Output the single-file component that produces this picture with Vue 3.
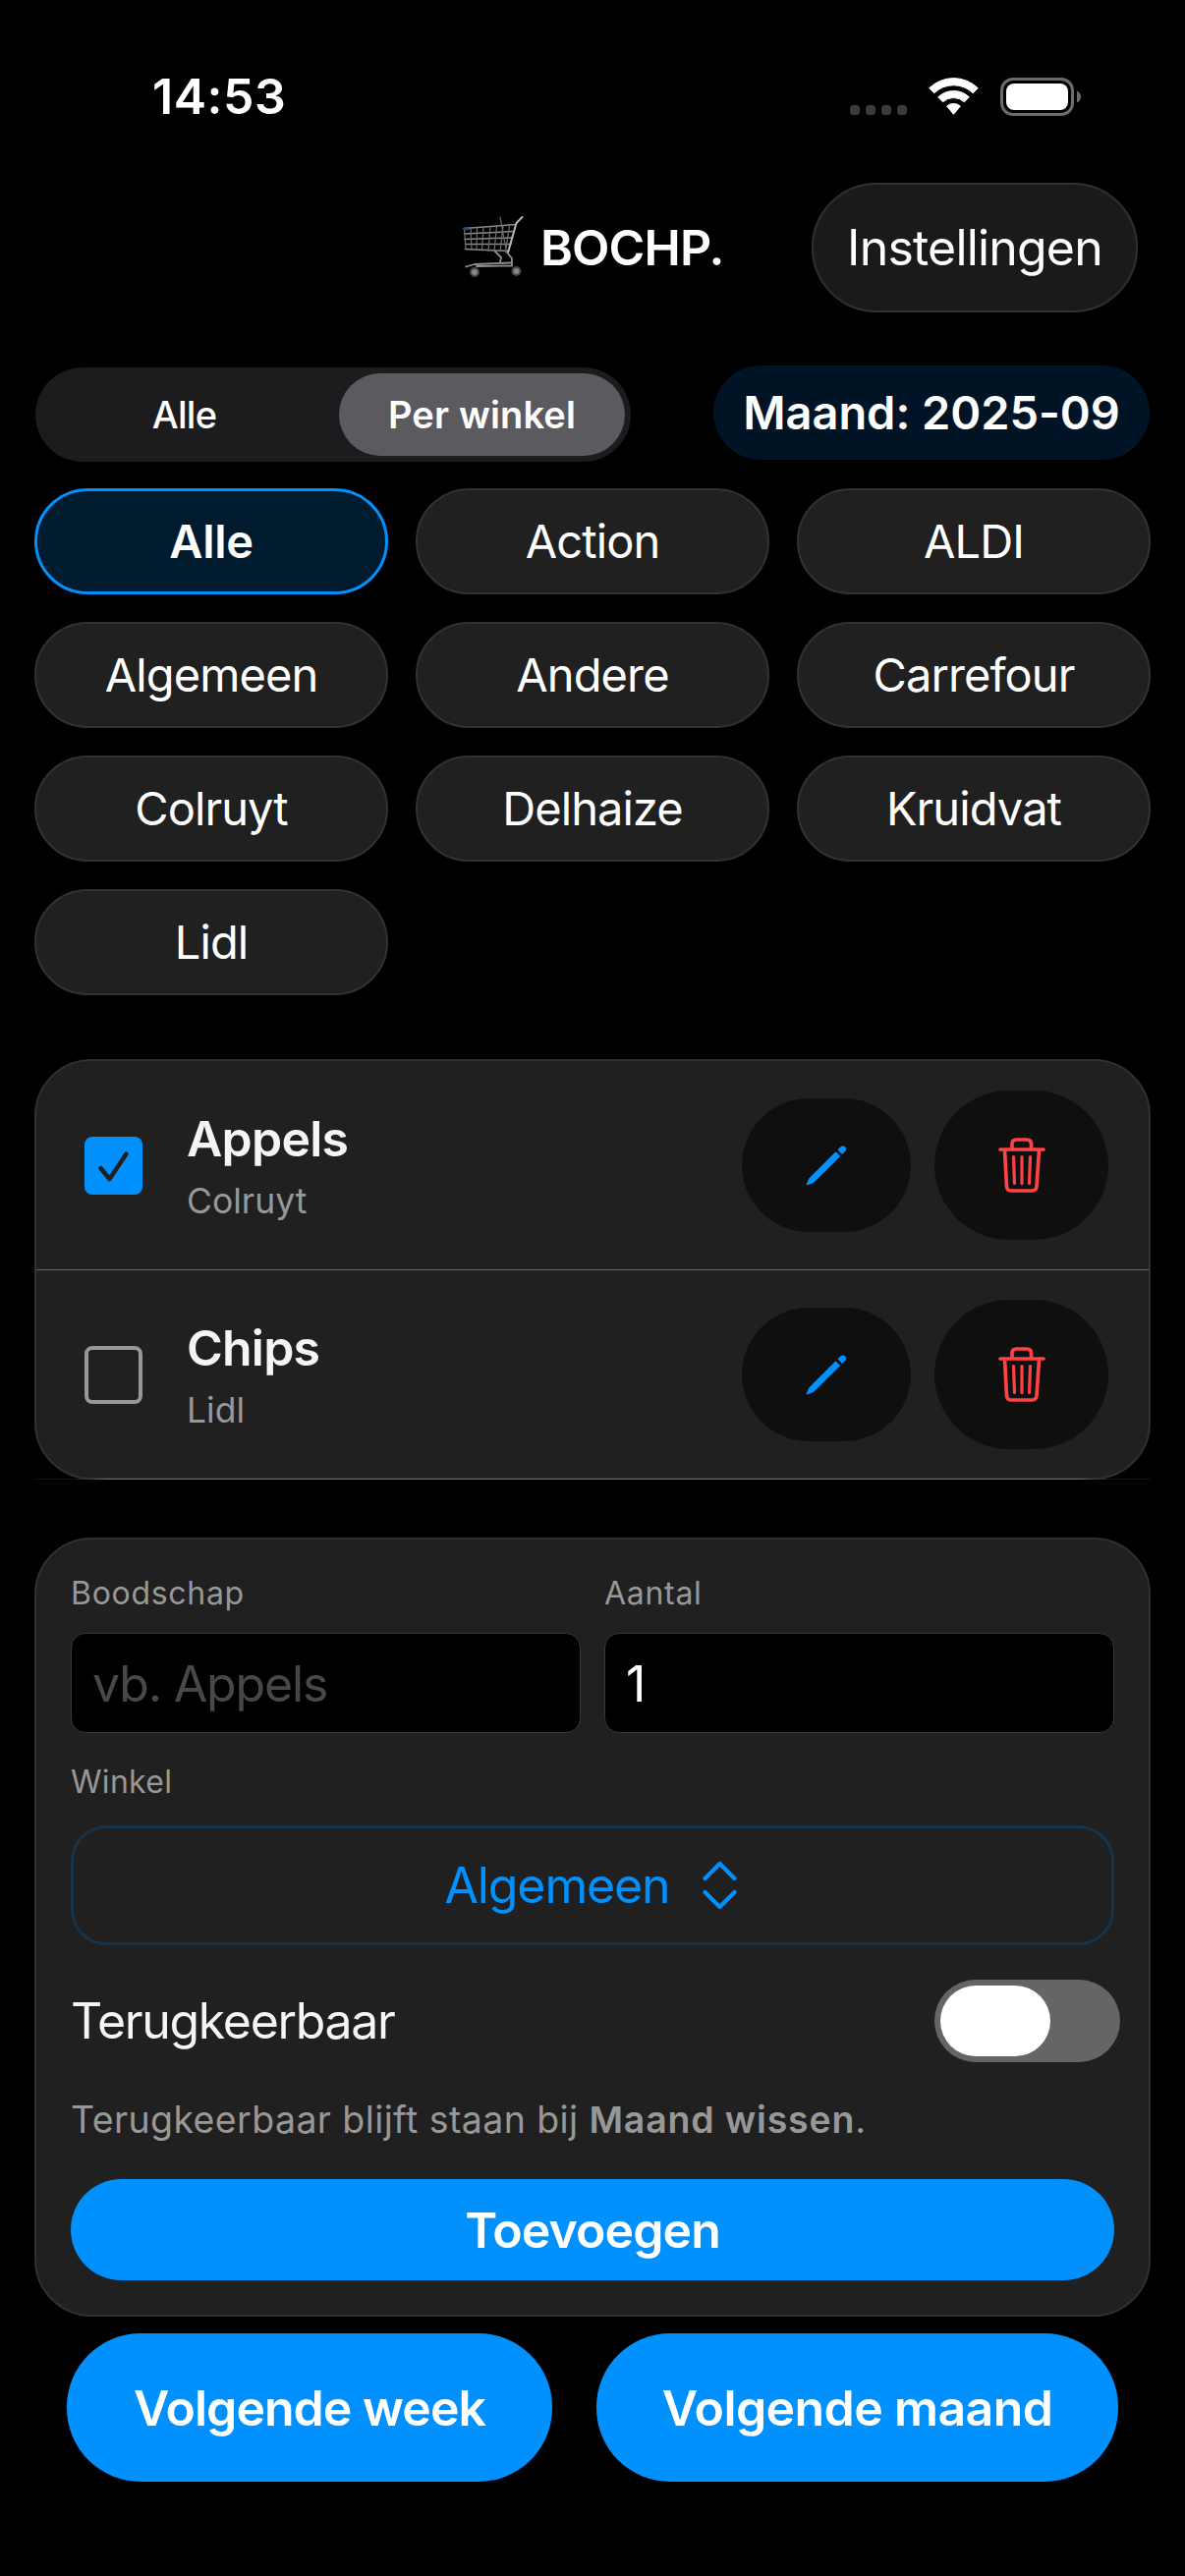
<script setup>
import { ref } from 'vue'

const shops = ['Alle', 'Action', 'ALDI', 'Algemeen', 'Andere', 'Carrefour', 'Colruyt', 'Delhaize', 'Kruidvat', 'Lidl']
const activeShop = ref('Alle')
const items = ref([
  { name: 'Appels', shop: 'Colruyt', done: true },
  { name: 'Chips', shop: 'Lidl', done: false },
])
</script>

<template>
  <div class="screen">
    <header class="status">
      <span class="time">14:53</span>
      <div class="status-icons">
        <span class="dots"><i v-for="n in 4" :key="n"></i></span>
        <svg class="wifi" width="51" height="38" viewBox="0 0 51 38">
          <path d="M0.8 10.6A35.5 35.5 0 0 1 50.2 10.6L45.3 15.8A28.4 28.4 0 0 0 5.7 15.8Z M9.7 19.8A23 23 0 0 1 41.3 19.8L36.4 24.8A16 16 0 0 0 14.6 24.8Z M18.6 29A10.5 10.5 0 0 1 32.4 29L25.5 37.3Z" fill="#fff" stroke="#fff" stroke-width="1" stroke-linejoin="round" />
        </svg>
        <svg class="battery" width="82" height="39" viewBox="0 0 82 39">
          <rect x="1.5" y="1.5" width="72" height="36" rx="11.5" fill="none" stroke="#6b6b6b" stroke-width="3" />
          <rect x="6" y="6" width="63" height="27" rx="8" fill="#fff" />
          <path d="M78 13.5Q82 15.5 82 19.5T78 25.5Z" fill="#6b6b6b" />
        </svg>
      </div>
    </header>

    <nav class="navbar">
      <h1 class="title">
        <svg class="cart" width="62" height="64" viewBox="0 0 62 64" fill="none" stroke-linecap="round" stroke-linejoin="round">
          <path d="M1 12.5L54 8.5M1.5 18L52 15.5M2 23.5L50.5 22M2.5 28.5L49 28.5M2.5 33.5L47 35.5" stroke="#8c8c8c" stroke-width="1.5" />
          <path d="M1.5 12L3 34M8 12L9 34.5M14.5 11.5L14 34.5M21 11L19.5 35M28 10.5L26 35.5M34.5 10.5L32 35.5M41 10L38 36M47.5 9.5L43.5 36.5M38 1L44 34" stroke="#6e6e6e" stroke-width="1.2" />
          <path d="M60.5 1L54.5 7L46 37" stroke="#b5b5b5" stroke-width="2" />
          <path d="M33 36L39 42L38 47M45 37L50 43V50M3 51.5L12 49L49 47.5M14 51L50 50.5" stroke="#8f8f8f" stroke-width="1.8" />
          <path d="M1 13H5" stroke="#1d4f78" stroke-width="2.5" />
          <circle cx="12" cy="57" r="4" fill="#8b8380" stroke="#4a4543" stroke-width="2" />
          <circle cx="54.5" cy="56" r="4" fill="#8b8380" stroke="#4a4543" stroke-width="2" />
        </svg>
        <span>BOCHP.</span>
      </h1>
      <button class="settings">Instellingen</button>
    </nav>

    <section class="filters">
      <div class="segmented">
        <span class="segment">Alle</span>
        <span class="segment selected">Per winkel</span>
      </div>
      <span class="month">Maand: 2025-09</span>
    </section>

    <section class="shops">
      <button v-for="shop in shops" :key="shop" class="shop" :class="{ active: shop === activeShop }" @click="activeShop = shop">{{ shop }}</button>
    </section>

    <section class="list">
      <div v-for="item in items" :key="item.name" class="row">
        <span class="check" :class="{ done: item.done }">
          <svg v-if="item.done" width="59" height="59" viewBox="0 0 59 59"><path d="M16.5 32L25.5 43L42.5 17.5" fill="none" stroke="#1f1f1f" stroke-width="4.5" stroke-linecap="round" stroke-linejoin="round" /></svg>
        </span>
        <div class="info">
          <span class="name">{{ item.name }}</span>
          <span class="sub">{{ item.shop }}</span>
        </div>
        <button class="edit">
          <svg width="42" height="42" viewBox="0 0 42 42" fill="#0091ff">
            <path d="M0.8 41.2Q0.500 40.600 1 39.500L3.500 34.200L30.500 7.200L35.200 11.900L8.200 38.700L2.600 41Q1.300 41.500 0.800 41.200Z" />
            <path d="M32.400 5.300L34.800 2.900Q37.600 0.300 40.200 2.500Q42.400 5 39.600 7.600L37.100 10Z" />
          </svg>
        </button>
        <button class="trash">
          <svg width="50" height="58" viewBox="0 0 50 58" fill="none" stroke="#ff4245" stroke-linecap="round" stroke-linejoin="round">
            <path d="M3 13H47M15 12V7.5Q15 3 19.500 3H30Q34.500 3 34.500 7.500V12M7.500 13.500L9.500 50.500Q9.800 55 14 55H35.500Q39.700 55 40 50.500L42.500 13.500" stroke-width="3.700" />
            <path d="M16.500 20.500L17.500 47.500M25 20.500V47.500M33.500 20.500L32.500 47.500" stroke-width="3.200" />
          </svg>
        </button>
      </div>
    </section>

    <section class="form">
      <div class="fields">
        <div class="field">
          <label class="label">Boodschap</label>
          <div class="input placeholder">vb. Appels</div>
        </div>
        <div class="field">
          <label class="label">Aantal</label>
          <div class="input">1</div>
        </div>
      </div>
      <label class="label winkel">Winkel</label>
      <button class="picker">
        <span>Algemeen</span>
        <svg width="35" height="50" viewBox="0 0 35 50" fill="none" stroke="#0091ff" stroke-width="4.2" stroke-linecap="round" stroke-linejoin="round"><path d="M2.500 18L17.500 3L32.500 18M2.500 32L17.500 47L32.500 32" /></svg>
      </button>
      <div class="recurring">
        <span>Terugkeerbaar</span>
        <span class="toggle"><i></i></span>
      </div>
      <p class="hint">Terugkeerbaar blijft staan bij <b>Maand wissen</b>.</p>
      <button class="add">Toevoegen</button>
    </section>

    <footer class="footer">
      <button class="next week">Volgende week</button>
      <button class="next next-month">Volgende maand</button>
    </footer>
  </div>
</template>

<style>
body {
  background: #000;
}
</style>

<style scoped>
.screen {
  box-sizing: border-box;
  width: 1206px;
  height: 2622px;
  overflow: hidden;
  background: #000;
  color: #fff;
  font-family: Inter, "Liberation Sans", sans-serif;
  font-size: 50px;
  line-height: 1;
}
button {
  box-sizing: border-box;
  display: flex;
  align-items: center;
  justify-content: center;
  margin: 0;
  padding: 0;
  border: 0;
  color: inherit;
  font: inherit;
  letter-spacing: inherit;
  white-space: nowrap;
}
svg {
  display: block;
}
.status {
  display: flex;
  align-items: center;
  justify-content: space-between;
  height: 60px;
  padding: 68px 106px 0 155px;
}
.time {
  font-weight: 600;
  letter-spacing: 0.54px;
}
.status-icons {
  display: flex;
}
.dots {
  display: flex;
  gap: 6px;
  padding-top: 28px;
  margin-right: 22px;
}
.dots i {
  width: 10px;
  height: 10px;
  border-radius: 3.5px;
  background: #3a3a3a;
}
.battery {
  margin-left: 22px;
}
.navbar {
  display: flex;
  justify-content: flex-end;
  align-items: center;
  margin-top: 58px;
  padding-right: 48px;
  height: 132px;
}
.title {
  display: flex;
  align-items: center;
  gap: 17px;
  width: 355px;
  margin: 0;
  font-size: 50px;
  font-weight: 600;
  letter-spacing: -0.89px;
}
.settings {
  width: 332px;
  height: 132px;
  padding-bottom: 1px;
  border: 2px solid #303030;
  border-radius: 66px;
  background: #1a1a1a;
  letter-spacing: -0.82px;
}
.filters {
  display: flex;
  align-items: flex-start;
  justify-content: space-between;
  margin-top: 54px;
  padding: 0 36px;
  height: 125px;
}
.segmented {
  box-sizing: border-box;
  display: flex;
  width: 606px;
  height: 96px;
  margin-top: 2px;
  padding: 6px;
  border-radius: 48px;
  background: #1c1c1e;
  font-size: 38px;
  font-weight: 500;
  letter-spacing: -0.7px;
}
.segment {
  box-sizing: border-box;
  display: flex;
  align-items: center;
  justify-content: center;
  width: 303px;
  padding-right: 12px;
}
.segment.selected {
  width: 291px;
  padding: 0;
  border-radius: 42px;
  background: #5b5a5f;
  font-weight: 600;
  letter-spacing: 0.14px;
}
.month {
  box-sizing: border-box;
  display: flex;
  align-items: center;
  justify-content: center;
  width: 444px;
  height: 96px;
  padding-bottom: 2px;
  border-radius: 48px;
  background: #001426;
  font-size: 47px;
  font-weight: 600;
  letter-spacing: -0.06px;
}
.shops {
  display: grid;
  grid-template-columns: repeat(3, 360px);
  grid-auto-rows: 108px;
  gap: 28px;
  margin-left: 35px;
}
.shop {
  padding-bottom: 2px;
  border: 2px solid #323232;
  border-radius: 54px;
  background: #202020;
  font-size: 47px;
  letter-spacing: -0.9px;
}
.shop.active {
  border: 3px solid #0091ff;
  background: #001a2e;
  font-weight: 600;
  letter-spacing: -0.27px;
}
.list {
  position: relative;
  box-sizing: border-box;
  height: 428px;
  margin: 65px 35px 0;
  border: 2px solid #303030;
  border-radius: 58px;
  background: #202020;
}
/* closing separator, dimmed where it leaves the rounded card */
.list::after {
  content: "";
  position: absolute;
  right: -1px;
  bottom: -2px;
  left: -1px;
  height: 1px;
  background: linear-gradient(to right, #161616 40px, #707070 75px, #707070 calc(100% - 75px), #161616 calc(100% - 40px));
}
.row {
  box-sizing: border-box;
  display: flex;
  align-items: center;
  height: 212px;
  padding: 0 41px 0 49px;
}
.row + .row {
  height: 213px;
  border-top: 1px solid #696969;
}
.check {
  box-sizing: border-box;
  width: 59px;
  height: 59px;
  border: 4px solid #989898;
  border-radius: 8px;
}
.check.done {
  border: 0;
  background: #0091ff;
}
.info {
  display: flex;
  flex: 1;
  flex-direction: column;
  margin-left: 45px;
}
.name {
  color: #f5f5f5;
  font-weight: 600;
  line-height: 73px;
  letter-spacing: -0.8px;
}
.sub {
  color: #989898;
  font-size: 35.5px;
  line-height: 54px;
}
.edit {
  width: 172px;
  height: 136px;
  margin-right: 24px;
  border-radius: 68px;
  background: #0f0f0f;
}
.trash {
  width: 177px;
  height: 152px;
  border-radius: 76px;
  background: #0f0f0f;
}
.form {
  box-sizing: border-box;
  height: 793px;
  margin: 59px 35px 0;
  padding: 35px 35px 0;
  border: 2px solid #303030;
  border-radius: 58px;
  background: #202020;
}
.fields {
  display: flex;
  gap: 24px;
}
.field {
  flex: 1;
}
.label {
  display: block;
  height: 40px;
  color: #989898;
  font-size: 32px;
  line-height: 40px;
  letter-spacing: 0.7px;
}
.input {
  box-sizing: border-box;
  height: 102px;
  margin-top: 20px;
  padding-left: 21px;
  border: 1px solid #383838;
  border-radius: 15px;
  background: #000;
  line-height: 102px;
}
.input.placeholder {
  color: #48484a;
  letter-spacing: -1.16px;
}
.winkel {
  margin-top: 30px;
  letter-spacing: 0.3px;
}
.picker {
  gap: 33px;
  width: 100%;
  height: 122px;
  margin-top: 24px;
  padding-right: 4px;
  border: 3px solid #173349;
  border-radius: 36px;
  background: none;
  color: #0091ff;
  letter-spacing: -1.12px;
}
.recurring {
  display: flex;
  align-items: center;
  justify-content: space-between;
  height: 84px;
  margin: 35px -6px 0 0;
  color: #f5f5f5;
  letter-spacing: -1.34px;
}
.toggle {
  box-sizing: border-box;
  width: 189px;
  height: 84px;
  padding: 6px;
  border-radius: 42px;
  background: #656565;
}
.toggle i {
  display: block;
  width: 112px;
  height: 72px;
  border-radius: 36px;
  background: #fff;
}
.hint {
  margin: 34px 0 0;
  color: #989898;
  font-size: 37.5px;
  line-height: 50px;
  letter-spacing: 0.4px;
  white-space: nowrap;
}
.hint b {
  font-weight: 600;
  letter-spacing: 0.81px;
}
.add {
  width: 100%;
  height: 103px;
  margin-top: 35px;
  border-radius: 52px;
  background: #0091ff;
  font-weight: 600;
  letter-spacing: -0.93px;
}
.footer {
  display: flex;
  gap: 45px;
  margin: 17px 0 0 68px;
}
.next {
  height: 151px;
  border-radius: 75px;
  background: #0091ff;
  font-weight: 600;
}
.week {
  width: 494px;
  letter-spacing: -0.97px;
}
.next-month {
  width: 531px;
  letter-spacing: -0.6px;
}
</style>
